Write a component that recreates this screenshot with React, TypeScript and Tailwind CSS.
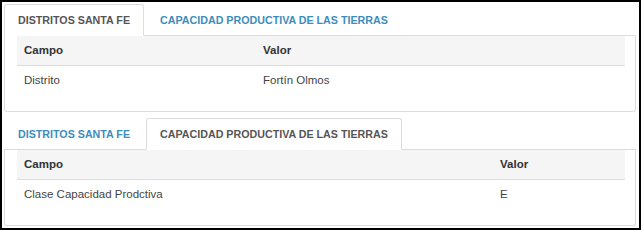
import React from "react";

interface Row {
  campo: string;
  valor: string;
}

interface PanelProps {
  active: 0 | 1;
  rows: Row[];
  firstCol: string;
}

const TABS = ["DISTRITOS SANTA FE", "CAPACIDAD PRODUCTIVA DE LAS TIERRAS"];

function TabPanel({ active, rows, firstCol }: PanelProps) {
  return (
    <div>
      {/* Tabs */}
      <div className="flex border-b border-[#dddddd]">
        {TABS.map((label, i) => (
          <div
            key={label}
            className={
              i === active
                ? "-mb-px mr-[2px] rounded-t-[3px] border border-[#dddddd] border-b-white bg-white px-[13px] pt-[9px] pb-[8px] text-[10.7px] font-bold leading-[13px] text-[#555555]"
                : "-mb-px mr-[2px] border border-transparent px-[13px] pt-[9px] pb-[8px] text-[10.7px] font-bold leading-[13px] text-[#3c8dbc]"
            }
          >
            {label}
          </div>
        ))}
      </div>

      {/* Content */}
      <div className="rounded-b-[3px] border-x border-b border-[#dddddd] pl-3 pr-[10px]">
        <div className={`grid ${firstCol} h-[30px] items-center border-b border-[#dddddd] bg-[#f5f5f5] text-[11.5px] font-bold text-[#333333]`}>
          <div className="px-[7px]">Campo</div>
          <div className="px-[7px]">Valor</div>
        </div>
        {rows.map((r) => (
          <div
            key={r.campo}
            className={`grid ${firstCol} h-[30px] items-center text-[11.5px] text-[#444444]`}
          >
            <div className="px-[7px]">{r.campo}</div>
            <div className="px-[7px]">{r.valor}</div>
          </div>
        ))}
        <div className="h-[15px]" />
      </div>
    </div>
  );
}

export default function App() {
  return (
    <div
      className="box-border h-[230px] w-[641px] border-2 border-black bg-white pt-[2px] pl-[2px] pr-[3px]"
      style={{ fontFamily: '"Liberation Sans", Arial, sans-serif' }}
    >
      <TabPanel
        active={0}
        firstCol="grid-cols-[239px_1fr]"
        rows={[{ campo: "Distrito", valor: "Fortín Olmos" }]}
      />
      <div className="h-[6px]" />
      <TabPanel
        active={1}
        firstCol="grid-cols-[476px_1fr]"
        rows={[{ campo: "Clase Capacidad Prodctiva", valor: "E" }]}
      />
    </div>
  );
}
